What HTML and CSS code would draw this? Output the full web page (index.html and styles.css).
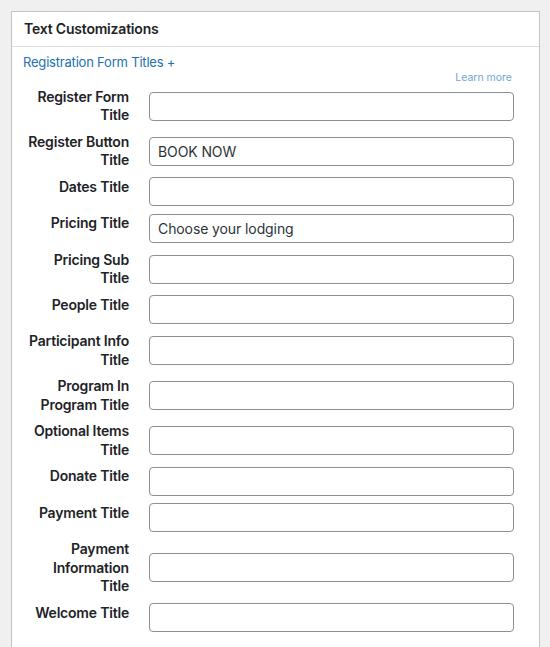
FILE: index.html
```html
<!DOCTYPE html>
<html lang="en">
<head>
<meta charset="utf-8">
<title>Text Customizations</title>
<link rel="stylesheet" href="styles.css">
</head>
<body>
<div class="panel">
  <div class="panel-header"><h2 class="panel-title">Text Customizations</h2></div>
  <div class="panel-body">
    <a class="toggle-link" href="#">Registration Form Titles +</a>
    <div class="learn-row"><a class="learn-more" href="#">Learn more</a></div>
    <div class="form-grid">
      <label class="field-label">Register Form Title</label>
      <div class="field-cell"><input class="field-input" type="text" value=""></div>

      <label class="field-label">Register Button Title</label>
      <div class="field-cell"><input class="field-input" type="text" value="BOOK NOW"></div>

      <label class="field-label">Dates Title</label>
      <div class="field-cell"><input class="field-input" type="text" value=""></div>

      <label class="field-label">Pricing Title</label>
      <div class="field-cell"><input class="field-input" type="text" value="Choose your lodging"></div>

      <label class="field-label">Pricing Sub Title</label>
      <div class="field-cell"><input class="field-input" type="text" value=""></div>

      <label class="field-label">People Title</label>
      <div class="field-cell"><input class="field-input" type="text" value=""></div>

      <label class="field-label">Participant Info Title</label>
      <div class="field-cell"><input class="field-input" type="text" value=""></div>

      <label class="field-label">Program In Program Title</label>
      <div class="field-cell"><input class="field-input" type="text" value=""></div>

      <label class="field-label">Optional Items Title</label>
      <div class="field-cell"><input class="field-input" type="text" value=""></div>

      <label class="field-label">Donate Title</label>
      <div class="field-cell"><input class="field-input" type="text" value=""></div>

      <label class="field-label">Payment Title</label>
      <div class="field-cell"><input class="field-input" type="text" value=""></div>

      <label class="field-label">Payment Information Title</label>
      <div class="field-cell"><input class="field-input" type="text" value=""></div>

      <label class="field-label">Welcome Title</label>
      <div class="field-cell"><input class="field-input" type="text" value=""></div>
    </div>
  </div>
</div>
</body>
</html>
```
FILE: styles.css
```css
html, body {
  margin: 0;
  padding: 0;
  background: #f0f0f1;
  font-family: Inter, "Liberation Sans", sans-serif;
  color: #1d2327;
}
body {
  padding: 11px 10px 0 11px;
  overflow: hidden;
}
.panel {
  background: #fff;
  border: 1px solid #c3c4c7;
  border-bottom: none;
  min-height: 700px;
}
.panel-header {
  border-bottom: 1px solid #dcdcde;
  padding: 8px 12px;
}
.panel-title {
  margin: 0;
  font-size: 14px;
  line-height: 18px;
  font-weight: 600;
  letter-spacing: -0.2px;
}
.panel-body {
  padding: 6px 27px 0 11px;
}
.toggle-link {
  display: block;
  font-size: 13px;
  line-height: 18px;
  color: #2271b1;
  text-decoration: none;
  letter-spacing: -0.2px;
}
.learn-row {
  display: flex;
  justify-content: flex-end;
}
.learn-more {
  font-size: 10.5px;
  line-height: 14px;
  color: #72a6d4;
  text-decoration: none;
}
.form-grid {
  display: grid;
  grid-template-columns: 106px 1fr;
  column-gap: 20px;
  margin-right: -2px;
  margin-top: -1.5px;
}
.field-label {
  text-align: right;
  font-size: 14px;
  line-height: 18.5px;
  font-weight: 600;
  padding: 4px 0;
  letter-spacing: -0.2px;
}
.field-cell {
  align-self: center;
  padding: 3.75px 0;
}
.field-input {
  display: block;
  box-sizing: border-box;
  width: 100%;
  height: 29px;
  margin: 0;
  padding: 0 8px;
  border: 1px solid #8c8f94;
  border-radius: 4px;
  background: #fff;
  font-family: Inter, "Liberation Sans", sans-serif;
  font-size: 14px;
  color: #2c3338;
  letter-spacing: -0.1px;
}
```
